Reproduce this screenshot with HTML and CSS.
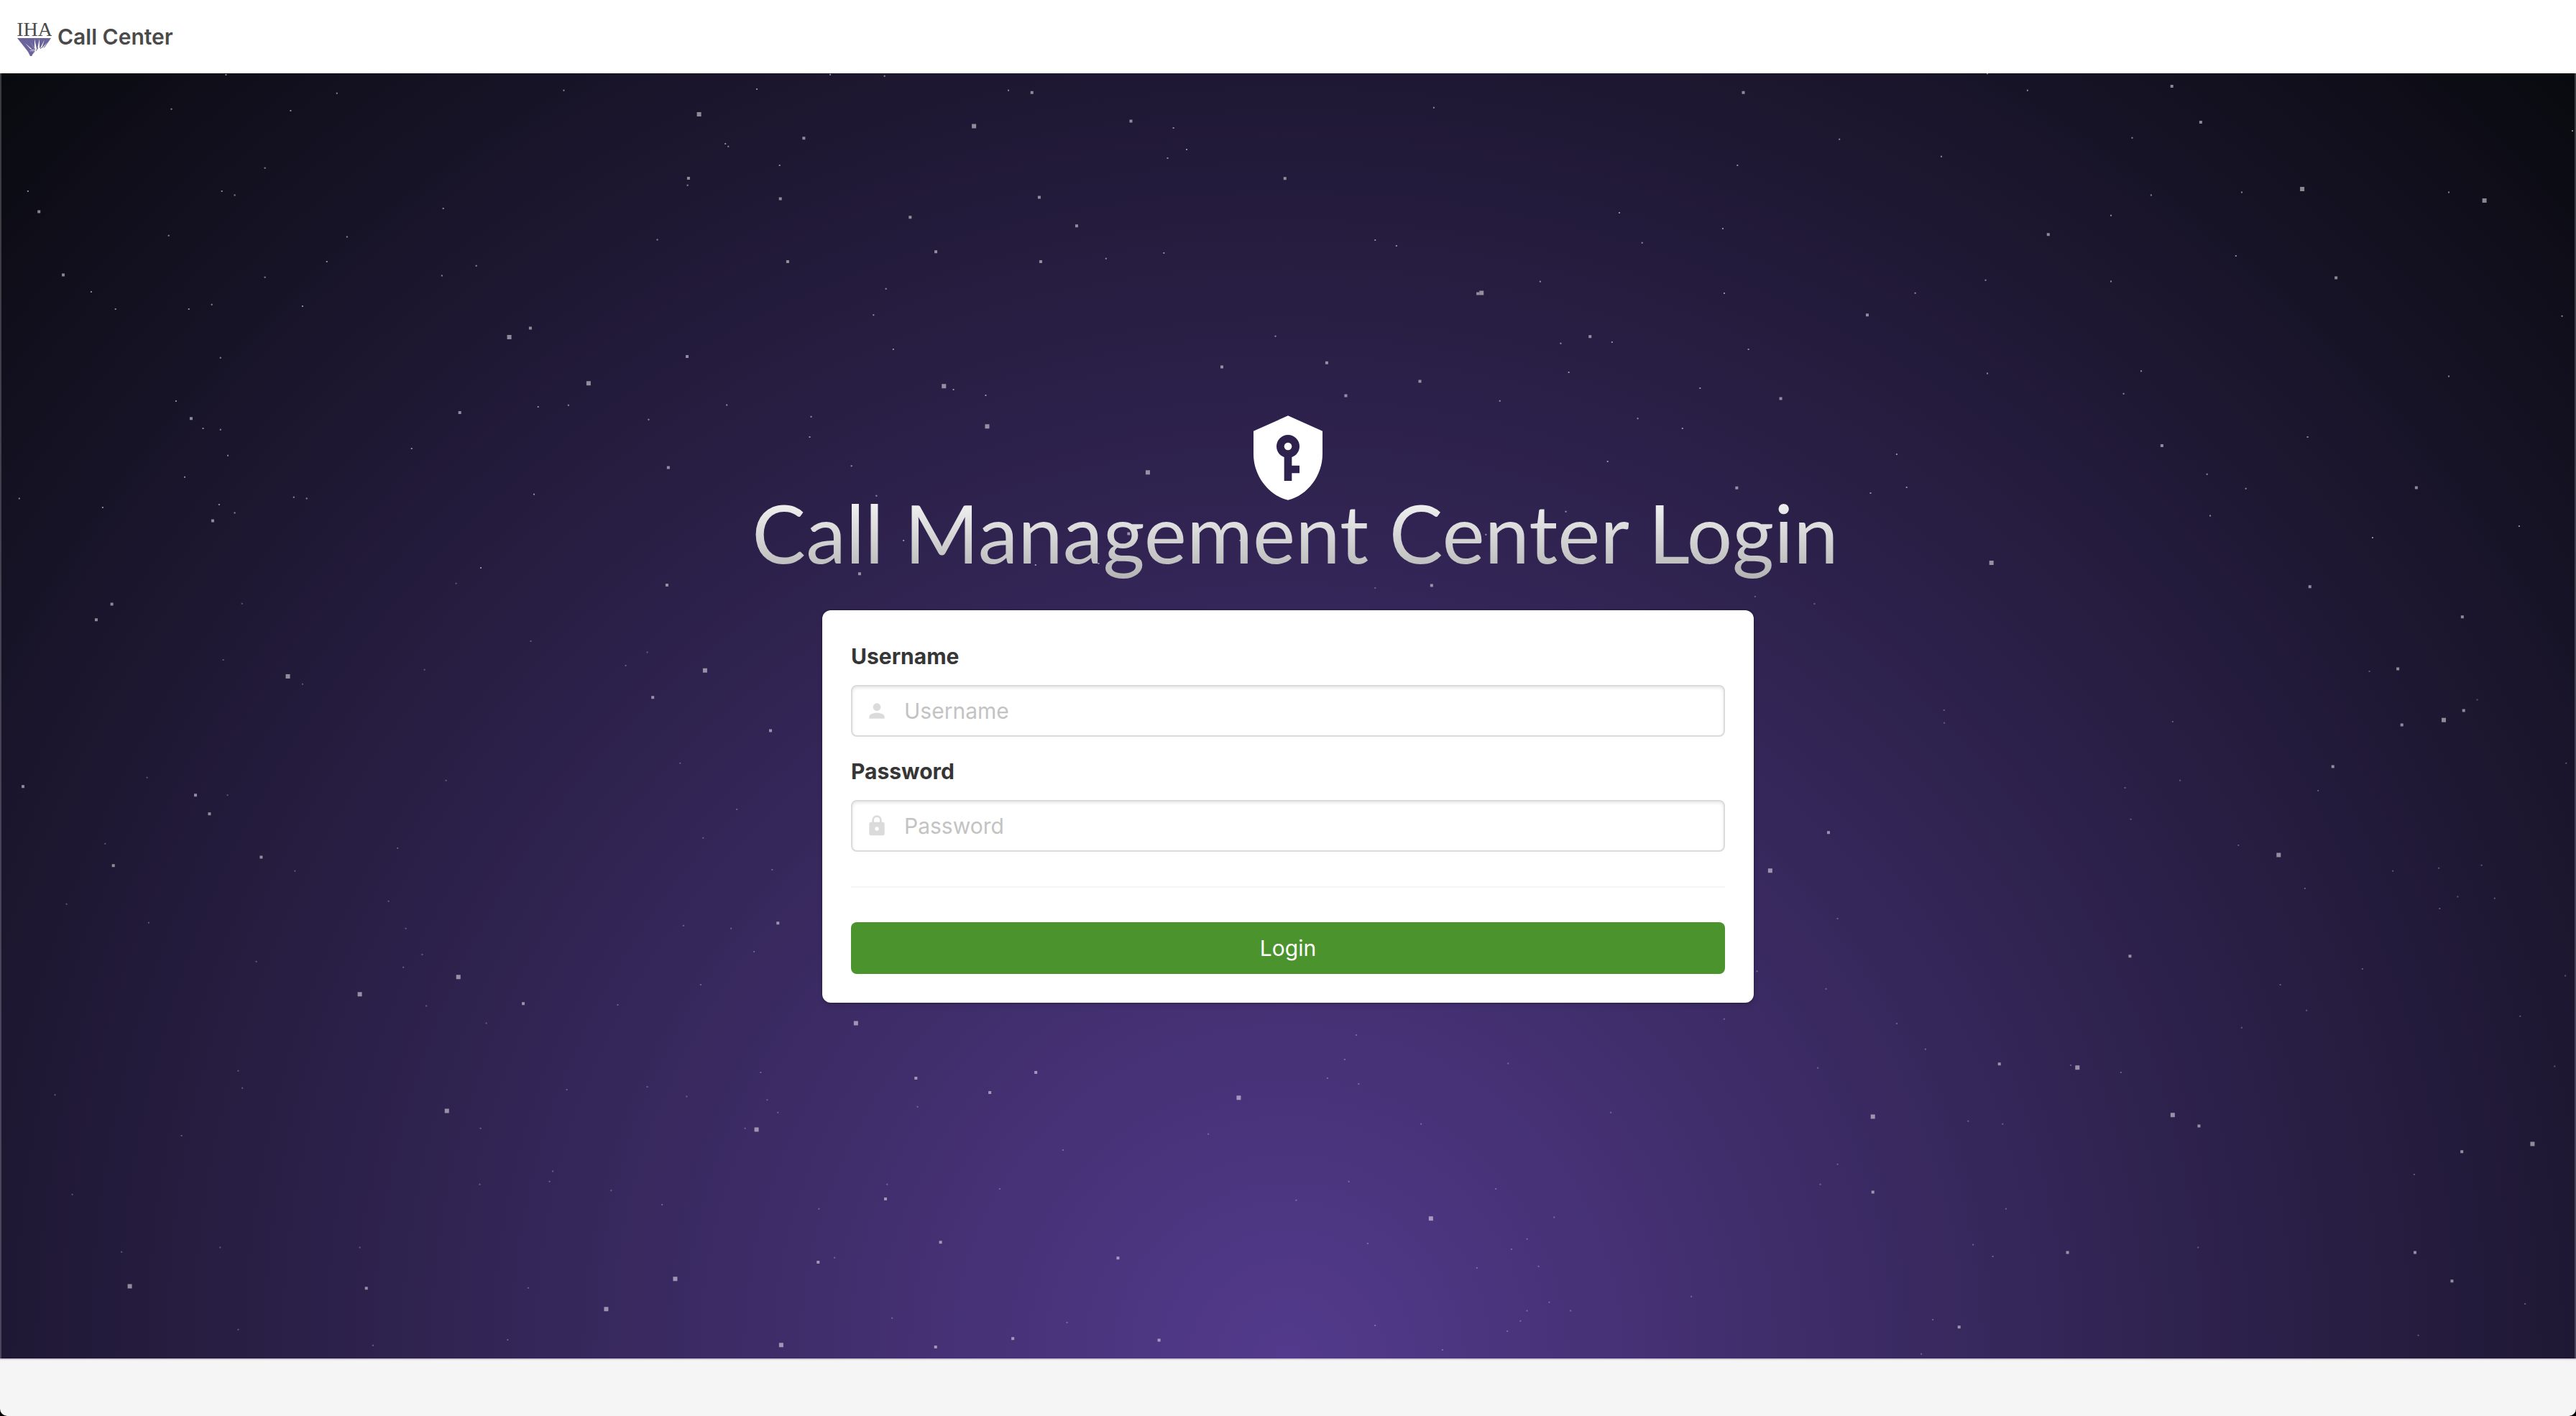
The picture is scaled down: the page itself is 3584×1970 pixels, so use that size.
FILE: index.html
```html
<!DOCTYPE html>
<html lang="en">
<head>
<meta charset="utf-8">
<meta name="viewport" content="width=device-width, initial-scale=1">
<title>Call Center</title>
<link rel="stylesheet" href="styles.css">
</head>
<body class="page">
<header class="topbar">
  <a class="brand" href="#">
    <svg class="brand-logo" viewBox="0 0 48 58" role="img" aria-label="IHA">
      <text class="brand-letters" x="24" y="28" text-anchor="middle">IHA</text>
      <path fill="#6b639b" d="M0 31H47L38 44 31 46 23 51 20 56H18L15 50Z"/>
      <path fill="#fff" d="M11 38l10 10-1-2zM11 38l9 10 4 2zM17 34l7 12-2 1zM17 34l5 13 3 0zM24 32l3 14h-3zM31 32l0 13-3 1zM38 33l-4 12h-2zM42 37l-6 8-1-1zM17 49l13-4 6-1-8 6z"/>
      <path fill="none" stroke="#6b639b" stroke-width="1" d="M16 49l4 7M19 46l3 7M24 45l-1 6M29 44l-3 5M35 43l-3 3"/>
    </svg>
    <span class="brand-name">Call Center</span>
  </a>
</header>

<main class="sky">
  <svg class="stars" viewBox="0 102 3584 1788" preserveAspectRatio="xMidYMid slice" aria-hidden="true">
    <g transform="translate(0 100) scale(.63776 .57398)">
      <path class="star" d="M493 7h0M735 52h0M374 90h0M634 94h0M1230 45h0M578 233h0M61 289h0M484 289h0M512 299h0M967 331h0M1500 275h0M368 397h0M757 400h0M713 460h0M1434 407h0M1039 470h0M964 494h0M578 498h0M199 533h0M252 575h0M412 575h0M462 564h0M660 568h0M481 693h0M384 798h0M443 864h0M481 867h0M497 930h0M403 982h0M1174 812h0M1240 808h0M1415 843h0M898 913h0M42 1034h0M224 1056h0M478 1049h0M512 1069h0M641 1031h0M669 1034h0M1165 1024h0M1049 1202h0"/>
      <path class="star faint" d="M995 1240h0M528 1289h0M487 1425h0M926 1449h0M660 1484h0M1158 1380h0M1412 1407h0M1365 1439h0"/>
      <path class="star medium" d="M1502 258h0M85 339h0M138 492h0M1157 621h0M1499 690h0M1003 826h0M417 840h0M1458 959h0M464 1088h0M244 1290h0M210 1328h0M1455 1244h0M1424 1516h0"/>
      <path class="star large" d="M1525 103h0M1111 643h0M1284 755h0M628 1465h0M1538 1451h0"/>
    </g>
    <g transform="translate(2600 100) scale(.62755 .57398)">
      <path class="star" d="M263 4h0M352 45h0M584 160h0M161 205h0M1560 143h0M626 299h0M827 292h0M1286 292h0M537 348h0M814 446h0M259 505h0M537 508h0M103 536h0M1537 592h0M263 731h0M604 725h0M565 780h0M1286 738h0M973 885h0M62 927h0M84 1007h0M4 1021h0M750 975h0M836 1010h0M757 1076h0M1117 1129h0M1442 1101h0"/>
      <path class="star faint" d="M1110 1453h0M1349 1522h0M167 1547h0"/>
      <path class="star medium" d="M672 35h0M736 122h0M398 394h0M1036 499h0M650 906h0M1214 1008h0M978 1248h0M1316 1321h0M1173 1447h0M1319 1548h0"/>
      <path class="star large" d="M961 284h0M1365 312h0M272 1190h0"/>
    </g>
    <g transform="translate(1000 100) scale(1.02041 .47832)">
      <path class="star" d="M152 8h0M226 12h0M52 50h0M395 54h0M975 104h0M620 163h0M9 209h0M13 217h0M638 226h0M612 251h0M83 272h0M1389 272h0M1528 196h0M1228 410h0M1369 456h0M1259 497h0M895 489h0M924 506h0M607 527h0M528 543h0M228 631h0M1120 610h0M1371 644h0M211 707h0M238 807h0M759 769h0M1148 790h0M1218 786h0M1404 807h0M1159 874h0M320 924h0M364 941h0M1065 957h0M1338 920h0M11 969h0M126 1003h0M124 1062h0M1253 1008h0M1314 1037h0M181 1146h0M215 1233h0M1212 1133h0M1155 1279h0M252 1363h0M432 1434h0M518 1430h0M711 1363h0M1046 1346h0"/>
      <path class="star faint" d="M895 1501h0M1413 1526h0M1494 1547h0"/>
      <path class="star medium" d="M427 60h0M1397 60h0M116 193h0M562 143h0M772 310h0M437 365h0M84 369h0M261 423h0M488 448h0M296 523h0M94 552h0M439 552h0M1035 645h0M1566 707h0M1188 770h0M829 846h0M686 858h0M956 900h0M855 942h0M1448 950h0M1388 1210h0M192 1460h0M972 1494h0M559 1343h0M755 1427h0"/>
      <path class="star large" d="M348 158h0M1040 643h0M307 914h0M366 1031h0M585 1165h0"/>
    </g>
    <g transform="translate(0 1000) scale(1.14286 .5676)">
      <path class="star faint" d="M828 109h0M179 144h0M277 187h0M543 151h0M897 222h0M128 306h0M484 317h0M856 292h0M359 373h0M940 370h0M81 454h0M473 447h0M181 500h0M494 514h0M832 507h0M890 514h0M918 571h0M514 578h0M312 595h0M491 609h0M853 652h0M519 704h0M752 701h0M592 746h0M290 863h0M295 905h0M67 922h0M690 909h0M788 902h0M836 926h0M926 867h0M934 934h0M947 965h0M1117 951h0M585 1004h0M907 1004h0M221 1022h0M1471 1018h0M1294 1057h0M673 1109h0M669 1134h0M584 1141h0M744 1156h0M1080 1141h0M1217 1152h0M88 1166h0M806 1191h0M997 1201h0M268 1296h0M438 1296h0M148 1307h0M1016 1321h0M643 1395h0M1086 1469h0M1299 1480h0M290 1497h0M618 1522h0M454 1536h0"/>
      <path class="star medium" d="M938 29h0M28 166h0M238 187h0M255 233h0M318 339h0M138 360h0M947 501h0M637 698h0M1261 867h0M1115 881h0M1205 916h0M1078 1177h0M1145 1283h0M996 1332h0M1361 1322h0M446 1396h0M1233 1519h0M1411 1523h0M1139 1540h0"/>
      <path class="star large" d="M558 633h0M438 675h0M1042 746h0M1508 929h0M544 961h0M921 1007h0M158 1391h0M822 1373h0M738 1447h0M951 1535h0"/>
    </g>
    <g transform="translate(1792 1000) scale(1.14286 .5676)">
      <path class="star faint" d="M799 10h0M1077 7h0M1556 109h0M1086 151h0M1019 169h0M1254 176h0M1026 246h0M1157 310h0M1453 359h0M1401 366h0M1345 373h0M1238 416h0M1424 436h0M1469 440h0M1402 465h0M669 490h0M1308 613h0M571 619h0M1555 630h0M1208 652h0M655 662h0M1240 715h0M1500 729h0M531 736h0M741 747h0M1161 757h0M83 775h0M776 810h0M69 835h0M268 845h0M953 849h0M645 856h0M1542 852h0M1014 867h0M48 881h0M86 895h0M393 965h0M828 986h0M162 993h0M870 993h0M669 1092h0M1371 1117h0M74 1134h0M648 1141h0M253 1152h0M10 1180h0M874 1201h0M324 1222h0M291 1275h0M97 1286h0M834 1289h0M272 1300h0M1108 1296h0M858 1318h0M305 1342h0M230 1346h0M491 1416h0M318 1430h0M1506 1434h0M291 1451h0M344 1451h0M785 1473h0M283 1476h0M106 1487h0M267 1501h0M1376 1511h0M188 1547h0M771 1557h0"/>
      <path class="star medium" d="M1356 15h0M1272 117h0M658 279h0M1025 582h0M866 846h0M1109 998h0M1429 1061h0M712 1160h0M949 1308h0M1372 1308h0M1417 1378h0M817 1491h0"/>
      <path class="star large" d="M1407 3h0M587 372h0M1206 334h0M961 855h0M712 975h0M1077 971h0M1515 1042h0M174 1225h0"/>
    </g>
  </svg>

  <div class="login">
    <svg class="login-shield" viewBox="0 0 24 24" aria-hidden="true">
      <path fill="currentColor" d="M12 8a1 1 0 0 1 1 1 1 1 0 0 1-1 1 1 1 0 0 1-1-1 1 1 0 0 1 1-1m9-3v6c0 5.55-3.84 10.74-9 12-5.16-1.26-9-6.45-9-12V5l9-4 9 4m-9 1a3 3 0 0 0-3 3c0 1.31.83 2.42 2 2.83V18h2v-2h2v-2h-2v-2.17c1.17-.41 2-1.52 2-2.83a3 3 0 0 0-3-3z"/>
    </svg>
    <h1 class="login-title">Call Management Center Login</h1>
    <form class="card">
      <div class="field">
        <label class="label" for="username">Username</label>
        <div class="control">
          <svg class="control-icon" viewBox="0 0 24 24" aria-hidden="true">
            <path fill="currentColor" d="M12 4a4 4 0 0 1 4 4 4 4 0 0 1-4 4 4 4 0 0 1-4-4 4 4 0 0 1 4-4m0 10c4.420 0 8 1.790 8 4v2H4v-2c0-2.210 3.580-4 8-4z"/>
          </svg>
          <input class="input" id="username" type="text" placeholder="Username">
        </div>
      </div>
      <div class="field">
        <label class="label" for="password">Password</label>
        <div class="control">
          <svg class="control-icon" viewBox="0 0 24 24" aria-hidden="true">
            <path fill="currentColor" d="M12 17a2 2 0 0 0 2-2 2 2 0 0 0-2-2 2 2 0 0 0-2 2 2 2 0 0 0 2 2m6-9a2 2 0 0 1 2 2v10a2 2 0 0 1-2 2H6a2 2 0 0 1-2-2V10a2 2 0 0 1 2-2h1V6a5 5 0 0 1 5-5 5 5 0 0 1 5 5v2h1m-6-5a3 3 0 0 0-3 3v2h6V6a3 3 0 0 0-3-3z"/>
          </svg>
          <input class="input" id="password" type="password" placeholder="Password">
        </div>
      </div>
      <hr class="divider">
      <button class="button" type="submit">Login</button>
    </form>
  </div>
</main>

<footer class="footer"></footer>
</body>
</html>
```
FILE: styles.css
```css
* {
  box-sizing: border-box;
}

html {
  background: #000;
}

.page {
  display: flex;
  flex-direction: column;
  min-height: 100vh;
  margin: 0;
  overflow: hidden;
  border-radius: 0 0 10px 10px;
  background: #f5f5f5;
  color: #363636;
  font-family: Inter, "Liberation Sans", sans-serif;
  font-size: 30px;
  line-height: 48px;
}

.topbar {
  display: flex;
  align-items: center;
  height: 102px;
  padding: 0 24px;
  background: #fff;
}

.brand {
  display: flex;
  align-items: center;
  gap: 8px;
  color: #4a4a4a;
  text-decoration: none;
}

.brand-logo {
  width: 48px;
  height: 58px;
}

.brand-letters {
  fill: #4a4a4a;
  font-family: "Liberation Serif", serif;
  font-size: 28px;
}

.brand-name {
  font-weight: 600;
}

.sky {
  position: relative;
  display: flex;
  flex: 1;
  flex-direction: column;
  align-items: center;
  justify-content: center;
  border: solid rgba(255, 255, 255, 0.2);
  border-width: 0 2px;
  background: radial-gradient(ellipse at bottom, #533a8c 0%, #090a0f 100%) border-box;
}

.stars {
  position: absolute;
  inset: 0 -2px;
  width: calc(100% + 4px);
  height: 100%;
}

.star {
  fill: none;
  stroke: #fff;
  stroke-linecap: square;
  stroke-opacity: 0.5;
  stroke-width: 2px;
  vector-effect: non-scaling-stroke;
}

.faint {
  stroke-opacity: 0.28;
}

.medium {
  stroke-width: 4px;
}

.large {
  stroke-width: 6px;
}

.login {
  position: relative;
  display: flex;
  flex-direction: column;
  align-items: center;
  width: 100%;
  padding: 0 32px 24px;
}

.login-shield {
  width: 128px;
  height: 128px;
  color: #fff;
}

/* The tall box below the line gives the text gradient room for descenders. */
.login-title {
  margin: -8px 0 0;
  padding: 0 0 60px 20px;
  background: linear-gradient(#f4f4f4, #9a9a9a);
  background-clip: text;
  color: transparent;
  font-family: Lato, sans-serif;
  font-size: 112px;
  font-weight: 400;
  line-height: 96px;
}

.card {
  width: 100%;
  max-width: 1296px;
  padding: 40px;
  border-radius: 12px;
  background: #fff;
  box-shadow: 0 4px 6px rgba(10, 10, 10, 0.1), 0 0 0 2px rgba(10, 10, 10, 0.1);
}

.field {
  margin-bottom: 24px;
}

.label {
  display: block;
  margin-bottom: 16px;
  font-weight: 700;
}

.control {
  position: relative;
}

.control-icon {
  position: absolute;
  top: 20px;
  left: 20px;
  width: 32px;
  height: 32px;
  color: #dbdbdb;
}

.input {
  display: block;
  width: 100%;
  height: 72px;
  padding: 0 24px 0 72px;
  border: 2px solid #dbdbdb;
  border-radius: 8px;
  background: #fff;
  box-shadow: inset 0 2px 4px rgba(10, 10, 10, 0.1);
  color: #363636;
  font: inherit;
}

.input::placeholder {
  color: #c3c3c3;
  opacity: 1;
}

.divider {
  height: 2px;
  margin: 48px 0;
  border: 0;
  background: #f5f5f5;
}

.button {
  display: block;
  width: 100%;
  height: 72px;
  padding: 0;
  border: 0;
  border-radius: 8px;
  background: #4b932c;
  color: #fff;
  font: inherit;
}

.footer {
  height: 80px;
  border-top: 2px solid #d5d0d8;
}
```
